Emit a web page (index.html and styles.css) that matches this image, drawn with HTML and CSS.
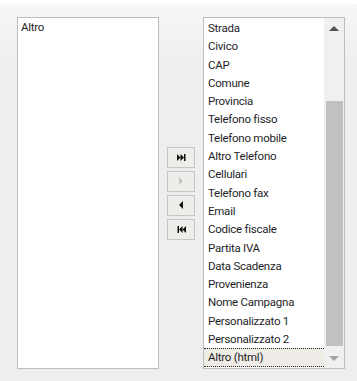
FILE: index.html
```html
<!DOCTYPE html>
<html lang="it">
<head>
    <meta charset="UTF-8">
    <meta name="viewport" content="width=device-width, initial-scale=1.0">
    <title>Campi</title>
    <link rel="stylesheet" href="styles.css">
</head>
<body>
    <div class="picker">
        <!-- Campi disponibili -->
        <div class="list list-left">
            <div class="item">Altro</div>
        </div>

        <!-- Pulsanti di spostamento -->
        <div class="controls">
            <button class="btn" title="Sposta tutti">
                <svg width="9" height="7" viewBox="0 0 9 7"><path d="M0 0L3.5 3.5L0 7Z M3.5 0L7 3.5L3.5 7Z" fill="#111"/><rect x="7" y="0" width="1.5" height="7" fill="#111"/></svg>
            </button>
            <button class="btn" disabled title="Sposta">
                <svg width="4" height="8" viewBox="0 0 4 8"><path d="M0 0L4 4L0 8Z" fill="#c4c4c4"/></svg>
            </button>
            <button class="btn" title="Rimuovi">
                <svg width="4" height="8" viewBox="0 0 4 8"><path d="M4 0L0 4L4 8Z" fill="#111"/></svg>
            </button>
            <button class="btn" title="Rimuovi tutti">
                <svg width="9" height="7" viewBox="0 0 9 7"><rect x="0.5" y="0" width="1.5" height="7" fill="#111"/><path d="M5.5 0L2 3.5L5.5 7Z M9 0L5.5 3.5L9 7Z" fill="#111"/></svg>
            </button>
        </div>

        <!-- Campi selezionati -->
        <div class="list list-right">
            <div class="items">
                <div class="item">Strada</div>
                <div class="item">Civico</div>
                <div class="item">CAP</div>
                <div class="item">Comune</div>
                <div class="item">Provincia</div>
                <div class="item">Telefono fisso</div>
                <div class="item">Telefono mobile</div>
                <div class="item">Altro Telefono</div>
                <div class="item">Cellulari</div>
                <div class="item">Telefono fax</div>
                <div class="item">Email</div>
                <div class="item">Codice fiscale</div>
                <div class="item">Partita IVA</div>
                <div class="item">Data Scadenza</div>
                <div class="item">Provenienza</div>
                <div class="item">Nome Campagna</div>
                <div class="item">Personalizzato 1</div>
                <div class="item">Personalizzato 2</div>
                <div class="item selected">Altro (html)</div>
            </div>
            <div class="scrollbar">
                <div class="arrow arrow-up"></div>
                <div class="track"><div class="thumb"></div></div>
                <div class="arrow arrow-down"></div>
            </div>
        </div>
    </div>
</body>
</html>
```

FILE: styles.css
```css
/* Basic reset */
* {
    margin: 0;
    padding: 0;
    box-sizing: border-box;
}

html, body {
    height: 100%;
    overflow: hidden;
}

body {
    font-family: Roboto, "Liberation Sans", sans-serif;
    font-size: 11.5px;
    letter-spacing: -0.25px;
    color: #1e1e28;
    background: linear-gradient(#ffffff 0, #ffffff 3px, #f7f7f7 4px, #eeeeee 70px);
}

/* Main row */
.picker {
    display: flex;
    align-items: center;
    gap: 8px;
    padding: 17px 0 0 17px;
}

/* List boxes */
.list {
    width: 142px;
    height: 352px;
    background: #fff;
    border: 1px solid #bdbdbd;
}

.list-left {
    padding: 1px 0;
}

.list-left .item {
    padding-left: 3px;
    line-height: 16px;
}

.list-right {
    display: flex;
}

.items {
    flex: 1;
    padding-top: 1px;
}

.items .item {
    height: 18.3px;
    line-height: 18px;
    padding-left: 4px;
    white-space: nowrap;
}

.items .item.selected {
    background: #efebe7;
    border-top: 1px dotted #222;
    border-bottom: 1px dotted #222;
    line-height: 16px;
}

/* Fake scrollbar */
.scrollbar {
    width: 20px;
    background: #f0f0f0;
    display: flex;
    flex-direction: column;
}

.arrow {
    height: 20px;
    display: flex;
    align-items: center;
    justify-content: center;
}

.arrow::before {
    content: '';
    border-left: 5px solid transparent;
    border-right: 5px solid transparent;
}

.arrow-up::before {
    border-bottom: 5px solid #505050;
}

.arrow-down::before {
    border-top: 5px solid #a3a3a3;
}

.track {
    flex: 1;
    padding: 63px 1px 2px 2px;
    display: flex;
}

.thumb {
    flex: 1;
    background: #c1c1c1;
}

/* Move buttons */
.controls {
    display: flex;
    flex-direction: column;
    gap: 3px;
}

.btn {
    width: 28px;
    height: 21px;
    border: 1px solid #c6c6c6;
    background: #efede9;
    display: flex;
    align-items: center;
    justify-content: center;
}
```
